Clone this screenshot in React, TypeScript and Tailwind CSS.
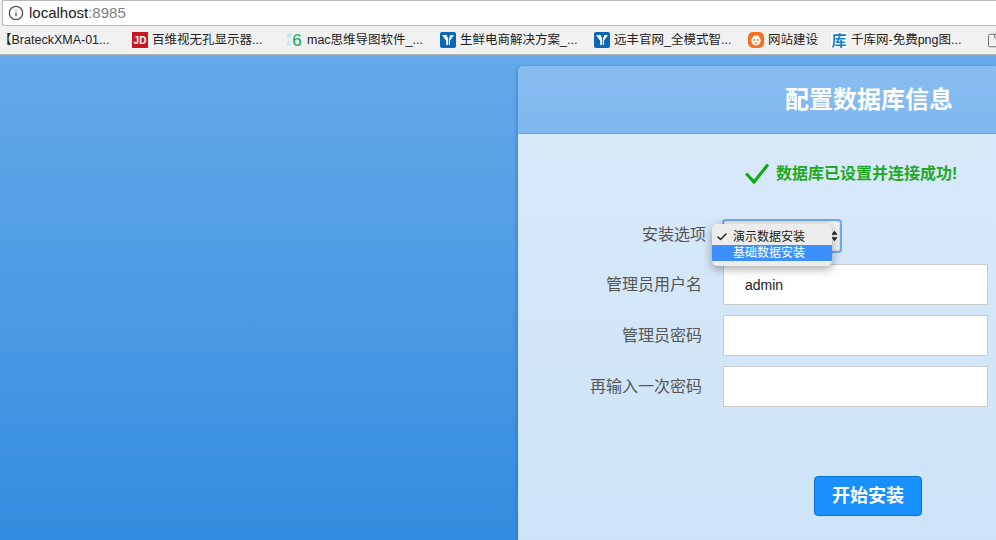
import { Info, Check, File } from 'lucide-react';

const FONT = "font-['Liberation_Sans','Noto_Sans_CJK_SC',sans-serif]";

function YIcon() {
  return (
    <span className="flex h-4 w-4 items-center justify-center rounded-[2px] bg-[#0b66b5]">
      <svg viewBox="0 0 16 16" className="h-4 w-4">
        <path d="M2 3 L6.6 3 L8.2 7 L8.2 13 L6.2 13 L6.2 8.8 Z M14 3 L10.4 3 L9 6.4 L9 13 L10 13 L10 8.4 Z" fill="#fff" />
      </svg>
    </span>
  );
}

function Bookmark({ icon, label, width }: { icon?: React.ReactNode; label: string; width: string }) {
  return (
    <div className={`flex shrink-0 items-center gap-[4px] ${width}`}>
      {icon}
      <span className="whitespace-nowrap text-[12.5px] leading-none text-[#222]">{label}</span>
    </div>
  );
}

function Field({ label, value }: { label: string; value?: string }) {
  return (
    <div className="flex h-[41px] items-center pr-[8px]">
      <label className="w-[205px] pr-[21px] text-right text-[16px] text-[#555]">{label}</label>
      <div className="flex h-[41px] flex-1 items-center border border-[#ccc] bg-white pl-[21px] pt-[1px] text-[14px] text-[#222]">
        {value}
      </div>
    </div>
  );
}

export default function App() {
  return (
    <div className={`flex h-[540px] w-[996px] flex-col overflow-hidden ${FONT}`}>
      <div className="h-[55px] shrink-0 border-b border-[#b4b4b4] bg-[#f1f1f1]">
        <div className="ml-[2px] flex h-[26px] items-center rounded-bl-[3px] border-y border-l border-[#b8b8b8] bg-white pl-[5px]">
          <Info className="h-[16px] w-[16px] text-[#555]" strokeWidth={2} />
          <span className="ml-[5px] text-[15px] text-[#222]">
            localhost<span className="text-[#808080]">:8985</span>
          </span>
        </div>
        <div className="flex h-[28px] items-center pl-[5px]">
          <Bookmark label="【BrateckXMA-01..." width="-ml-[6px] w-[133px]" />
          <Bookmark
            width="w-[155px]"
            label="百维视无孔显示器..."
            icon={<span className="flex h-4 w-4 items-center justify-center bg-[#c81623] text-[10px] font-bold text-white">JD</span>}
          />
          <Bookmark
            width="w-[153px]"
            label="mac思维导图软件_..."
            icon={
              <span className="flex h-4 w-4 items-center text-[17px] leading-none text-[#11a84a]">
                <span className="mr-[1px] text-[6px] leading-[7px] text-[#7cc8ee]">
                  P
                  <br />C
                </span>
                6
              </span>
            }
          />
          <Bookmark width="w-[154px]" label="生鲜电商解决方案_..." icon={<YIcon />} />
          <Bookmark width="w-[154px]" label="远丰官网_全模式智..." icon={<YIcon />} />
          <Bookmark
            width="w-[83px]"
            label="网站建设"
            icon={
              <svg viewBox="0 0 16 16" className="h-4 w-4">
                <rect width="16" height="16" rx="5" fill="#f5701f" />
                <circle cx="8" cy="8.7" r="4.7" fill="#fff" />
                <path d="M5 5 L7 2.8 L8 4.4 L9.5 2.8 L11 5 Z" fill="#fff" />
                <circle cx="6.3" cy="8" r="0.9" fill="#f5701f" />
                <circle cx="9.7" cy="8" r="0.9" fill="#f5701f" />
                <path d="M6 10.4 H10 L8 12.3 Z" fill="#f5701f" />
              </svg>
            }
          />
          <Bookmark
            width="w-[155px]"
            label="千库网-免费png图..."
            icon={<span className="flex h-4 w-4 items-center justify-center bg-white text-[15px] font-bold leading-none text-[#1a7fd1]">库</span>}
          />
          <File className="h-[15px] w-[15px] shrink-0 text-[#666]" strokeWidth={1.5} />
        </div>
      </div>

      <div className="flex-1 bg-gradient-to-b from-[#64a9e9] to-[#2f8bdf] pl-[518px] pt-[11px]">
        <div className="h-[500px] w-[478px] rounded-tl-[6px] bg-gradient-to-b from-[#d9eafa] to-[#cde3f7] shadow-[-2px_0_3px_rgba(30,90,160,0.3)]">
          <div className="flex h-[68px] items-center rounded-tl-[6px] border-b border-[#5fa5e6] bg-gradient-to-b from-[#88bdf0] to-[#7fb7ef] pl-[267px] pt-[1px]">
            <h1 className="text-[24px] font-bold text-white">配置数据库信息</h1>
          </div>

          <div className="flex h-[80px] items-center pl-[227px]">
            <svg viewBox="0 0 24 22" className="h-[22px] w-[24px]" fill="none">
              <path d="M1.2 10.5 L9 19 L23 1.5" stroke="#14a814" strokeWidth="3.2" />
            </svg>
            <span className="ml-[7px] text-[16px] font-bold text-[#22a822]">数据库已设置并连接成功!</span>
          </div>

          <div className="relative flex h-[40px] items-center">
            <label className="w-[188px] pt-[1px] text-right text-[16px] text-[#555]">安装选项</label>
            <div className="absolute left-[206px] top-[7px] h-[30px] w-[116px] rounded-[2px] border border-[#ddd] bg-[#f0f0f0] shadow-[0_0_0_2px_#6fa8ec]">
              <svg viewBox="0 0 8 12" className="absolute right-[1px] top-[8px] h-[12px] w-[7px]">
                <path d="M4 0 L7.5 4.5 H0.5 Z M4 12 L7.5 7.5 H0.5 Z" fill="#222" />
              </svg>
            </div>
            <div className="absolute left-[194px] top-[10px] z-10 w-[120px] rounded-[5px] bg-[#ececec] py-[5px] text-[12px] leading-[16px] text-[#222] shadow-[0_3px_10px_rgba(0,0,0,0.35)]">
              <div className="relative pl-[21px]">
                <Check className="absolute left-[4px] top-[2px] h-[12px] w-[12px]" strokeWidth={3} />
                演示数据安装
              </div>
              <div className="bg-[#3d8ffc] pl-[21px] text-white">基础数据安装</div>
            </div>
          </div>

          <div className="mt-[10px] flex flex-col gap-[10px]">
            <Field label="管理员用户名" value="admin" />
            <Field label="管理员密码" />
            <Field label="再输入一次密码" />
          </div>

          <div className="mt-[69px] pl-[296px]">
            <button className="h-[40px] w-[108px] rounded-[4px] border border-[#0f74d1] bg-[#1890ff] text-[18px] font-bold text-white">
              开始安装
            </button>
          </div>
        </div>
      </div>
    </div>
  );
}
